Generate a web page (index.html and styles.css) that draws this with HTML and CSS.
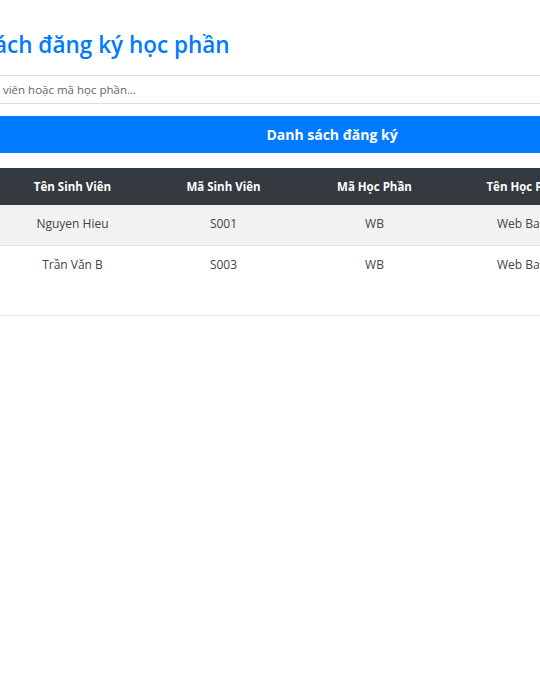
FILE: index.html
```html
<!DOCTYPE html>
<html lang="vi">
<head>
<meta charset="utf-8">
<title>Danh sách đăng ký học phần</title>
<link rel="stylesheet" href="styles.css">
</head>
<body>
<div class="page">
  <div class="container">
    <h2 class="title">Danh sách đăng ký học phần</h2>
    <input class="search" type="text" placeholder="Tìm tên sinh viên hoặc mã học phần...">
    <div class="bar">Danh sách đăng ký</div>
    <table class="table">
      <colgroup>
        <col class="c-id"><col class="c-w"><col class="c-w"><col class="c-w"><col class="c-w"><col class="c-act">
      </colgroup>
      <thead>
        <tr><th>STT</th><th>Tên Sinh Viên</th><th>Mã Sinh Viên</th><th>Mã Học Phần</th><th>Tên Học Phần</th><th>Hành động</th></tr>
      </thead>
      <tbody>
        <tr class="odd"><td>1</td><td>Nguyen Hieu</td><td>S001</td><td>WB</td><td>Web Basic</td><td></td></tr>
        <tr class="tall"><td>2</td><td>Trần Văn B</td><td>S003</td><td>WB</td><td>Web Basic</td><td></td></tr>
      </tbody>
    </table>
  </div>
</div>
</body>
</html>
```
FILE: styles.css
```css
html, body {
  margin: 0;
  padding: 0;
  background: #fff;
  overflow: hidden;
}
body {
  font-family: "Open Sans", "Noto Sans", sans-serif;
  color: #333;
}
.page {
  width: 540px;
}
.container {
  width: 814px;
  margin-left: -75px;
  padding-top: 29px;
}
.title {
  margin: 0 0 14px -6px;
  font-size: 22.5px;
  line-height: 32px;
  font-weight: 600;
  color: #007bff;
  white-space: nowrap;
}
.search {
  display: block;
  box-sizing: border-box;
  width: 100%;
  height: 29px;
  margin: 0 0 12px;
  padding: 0 8px;
  border: 1px solid #dcdcdc;
  border-radius: 0;
  font-family: inherit;
  font-size: 11.5px;
  color: #495057;
  outline: none;
}
.search::placeholder {
  color: #666;
}
.bar {
  height: 37px;
  line-height: 37px;
  margin-bottom: 15px;
  background: #007bff;
  border-radius: 4px;
  color: #fff;
  text-align: center;
  font-weight: 700;
  font-size: 14px;
}
.table {
  width: 100%;
  border-collapse: collapse;
  table-layout: fixed;
  font-size: 12px;
}
.c-id { width: 72px; }
.c-w { width: 151px; }
.c-act { width: 138px; }
.table th {
  background: #343a40;
  color: #fff;
  font-weight: 700;
  font-size: 11.5px;
  height: 37px;
  padding: 0 8px;
  text-align: center;
  vertical-align: middle;
}
.table td {
  text-align: center;
  vertical-align: top;
  padding: 10px 8px 0;
  border-bottom: 1px solid #e6e6e6;
  color: #444;
  line-height: 18px;
}
.odd td {
  background: #f2f2f2;
  height: 30px;
}
.tall td {
  height: 59px;
}
```
